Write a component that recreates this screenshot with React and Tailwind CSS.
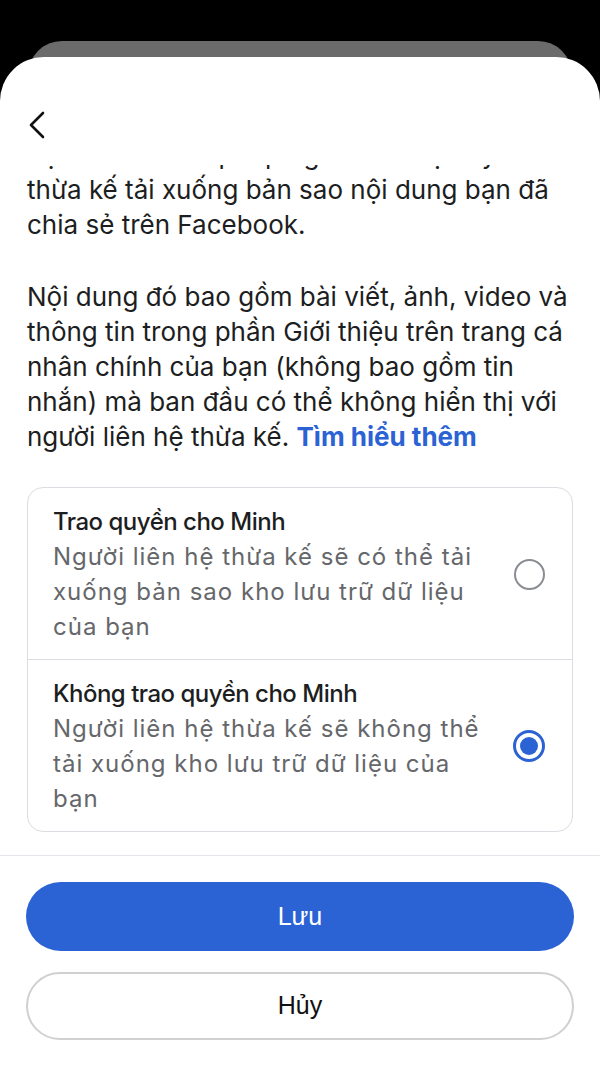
import React, { useState } from 'react';

const options = [
  {
    id: 'allow',
    title: 'Trao quyền cho Minh',
    lines: ['Người liên hệ thừa kế sẽ có thể tải', 'xuống bản sao kho lưu trữ dữ liệu', 'của bạn'],
  },
  {
    id: 'deny',
    title: 'Không trao quyền cho Minh',
    lines: ['Người liên hệ thừa kế sẽ không thể', 'tải xuống kho lưu trữ dữ liệu của', 'bạn'],
  },
];

const Radio = ({ checked }) =>
  checked ? (
    <div className="w-[32px] h-[32px] rounded-full border-[3px] border-[#2b62d4] flex items-center justify-center">
      <div className="w-[18px] h-[18px] rounded-full bg-[#2b62d4]" />
    </div>
  ) : (
    <div className="w-[31px] h-[31px] rounded-full border-[2.5px] border-[#8a8d91]" />
  );

const Lines = ({ lines }) =>
  lines.map((l, i) => (
    <span key={i} className="block whitespace-nowrap">
      {l}
    </span>
  ));

export default function App() {
  const [selected, setSelected] = useState('deny');

  return (
    <div className="w-[600px] h-[1067px] bg-black overflow-hidden flex flex-col" style={{ fontFamily: 'Inter, Roboto, sans-serif' }}>
      <div className="h-[41px] shrink-0" />
      {/* sheet stacked behind */}
      <div className="mx-[28px] h-[60px] shrink-0 rounded-t-[34px] bg-[#6b6b6b]" />

      <div className="relative -mt-[44px] flex-1 min-h-0 rounded-t-[44px] bg-white flex flex-col">
        <div className="h-[108px] shrink-0 pl-[28px] pt-[54px]">
          <svg width="18" height="28" viewBox="0 0 18 28" fill="none">
            <path d="M15 2 L3 14 L15 26" stroke="#111" strokeWidth="2.6" strokeLinecap="round" strokeLinejoin="round" />
          </svg>
        </div>

        <div className="flex-1 min-h-0 overflow-hidden px-[27px]">
          <div className="-mt-[28px] text-[26px] leading-[35px] text-[#1c1e21]">
            <p>
              <Lines
                lines={[
                  'Bạn có thể cho phép người liên hệ này',
                  'thừa kế tải xuống bản sao nội dung bạn đã',
                  'chia sẻ trên Facebook.',
                ]}
              />
            </p>
            <p className="mt-[37px]">
              <Lines
                lines={[
                  'Nội dung đó bao gồm bài viết, ảnh, video và',
                  'thông tin trong phần Giới thiệu trên trang cá',
                  'nhân chính của bạn (không bao gồm tin',
                  'nhắn) mà ban đầu có thể không hiển thị với',
                ]}
              />
              <span className="block whitespace-nowrap">
                người liên hệ thừa kế. <span className="font-bold text-[#2b62d4]">Tìm hiểu thêm</span>
              </span>
            </p>
          </div>

          <div className="mt-[33px] rounded-[16px] border border-[#dadde1] overflow-hidden">
            {options.map((o, i) => (
              <button
                key={o.id}
                onClick={() => setSelected(o.id)}
                className={`w-full flex items-center text-left pl-[25px] pr-[27px] pt-[16px] pb-[15px] ${i > 0 ? 'border-t border-[#dadde1]' : ''}`}
              >
                <div className="leading-[35px]">
                  <div className="text-[24px] tracking-[-0.5px] font-medium text-[#1c1e21]">{o.title}</div>
                  <div className="text-[24px] tracking-[1px] text-[#65676b]">
                    <Lines lines={o.lines} />
                  </div>
                </div>
                <div className="ml-auto">
                  <Radio checked={selected === o.id} />
                </div>
              </button>
            ))}
          </div>
        </div>

        <div className="shrink-0 border-t border-[#e4e6eb] px-[26px] pt-[26px] pb-[27px] flex flex-col gap-[21px]" style={{ fontFamily: '"Liberation Sans", Arial, sans-serif' }}>
          <button className="h-[69px] rounded-full bg-[#2b62d4] text-white text-[25px]">Lưu</button>
          <button className="h-[68px] rounded-full border-2 border-[#d0d0d0] text-[#111] text-[25px]">Hủy</button>
        </div>
      </div>
    </div>
  );
}
